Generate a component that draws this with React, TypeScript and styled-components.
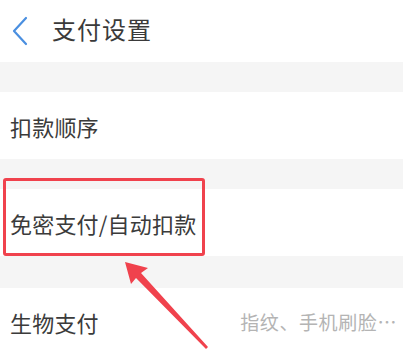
import styled, { createGlobalStyle } from "styled-components";

const GlobalStyle = createGlobalStyle`
  html, body {
    margin: 0;
    padding: 0;
    background: #ffffff;
  }
  body {
    font-family: "Noto Sans CJK SC", "Noto Sans", sans-serif;
    overflow: hidden;
  }
`;

const Page = styled.div`
  position: relative;
  width: 403px;
  height: 351px;
  background: #f5f5f5;
  overflow: hidden;
`;

const Header = styled.div`
  height: 62px;
  background: #fff;
  display: flex;
  align-items: center;
  padding-left: 10px;
  gap: 22px;
`;

const BackButton = styled.button`
  border: 0;
  background: none;
  padding: 0;
  width: 20px;
  height: 32px;
  display: flex;
  align-items: center;
  justify-content: center;
`;

const Title = styled.h1`
  margin: 0;
  font-size: 24px;
  font-weight: 400;
  color: #3a3a3a;
  letter-spacing: 1px;
  padding-bottom: 6px;
`;

const Section = styled.div`
  margin-top: ${p => p.$gap}px;
  background: #fff;
`;

const Row = styled.div`
  height: 67px;
  display: flex;
  align-items: center;
  justify-content: space-between;
  padding: 0 6px 0 10px;
`;

const Label = styled.span`
  font-size: 22px;
  color: #3b3b3b;
  letter-spacing: 0.2px;
`;

const Value = styled.span`
  font-size: 19px;
  color: #b4b4b4;
  letter-spacing: 0.6px;
`;

const Highlight = styled.div`
  position: absolute;
  left: 3px;
  top: 178px;
  width: 196px;
  height: 72px;
  border: 3px solid #f0424d;
  border-radius: 3px;
`;

const Arrow = styled.svg`
  position: absolute;
  left: 0;
  top: 0;
  pointer-events: none;
`;

export default function App() {
  return (
    <Page>
      <GlobalStyle />
      <Header>
        <BackButton aria-label="返回">
          <svg width="18" height="30" viewBox="0 0 18 30">
            <path d="M15 2 L3 15 L15 28" fill="none" stroke="#4a8fe0" strokeWidth="2.2" strokeLinecap="round" strokeLinejoin="round" />
          </svg>
        </BackButton>
        <Title>支付设置</Title>
      </Header>
      <Section $gap={30}>
        <Row><Label>扣款顺序</Label></Row>
      </Section>
      <Section $gap={30}>
        <Row><Label>免密支付/自动扣款</Label></Row>
      </Section>
      <Section $gap={32}>
        <Row>
          <Label>生物支付</Label>
          <Value>指纹、手机刷脸⋯</Value>
        </Row>
      </Section>
      <Highlight />
      <Arrow width="403" height="351" viewBox="0 0 403 351">
        <path d="M125 262 L148 268 L141 273 L208 347 L206 349 L136 278 L131 284 Z" fill="#f0424d" />
      </Arrow>
    </Page>
  );
}
